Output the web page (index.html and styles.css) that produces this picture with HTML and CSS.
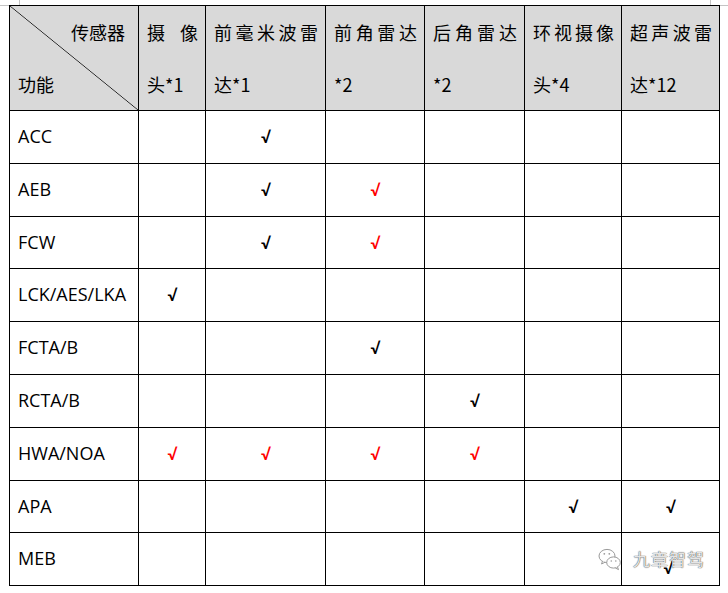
FILE: index.html
```html
<!DOCTYPE html>
<html lang="zh-CN">
<head>
<meta charset="utf-8">
<title>传感器与功能对照表</title>
<link rel="stylesheet" href="styles.css">
</head>
<body>
<div class="page">
  <div class="marks"><span class="mark mark-left"></span><span class="mark mark-right"></span></div>
  <table class="grid">
    <colgroup>
      <col class="c1"><col class="c2"><col class="c3"><col class="c4"><col class="c5"><col class="c6"><col class="c7">
    </colgroup>
    <thead>
      <tr>
        <th class="diag"><div class="diag-top">传感器</div><div class="diag-bottom">功能</div></th>
        <th>摄像头*1</th>
        <th>前毫米波雷达*1</th>
        <th>前角雷达*2</th>
        <th>后角雷达*2</th>
        <th>环视摄像头*4</th>
        <th>超声波雷达*12</th>
      </tr>
    </thead>
    <tbody>
      <tr><td>ACC</td><td></td><td class="ok">√</td><td></td><td></td><td></td><td></td></tr>
      <tr><td>AEB</td><td></td><td class="ok">√</td><td class="ok red">√</td><td></td><td></td><td></td></tr>
      <tr><td>FCW</td><td></td><td class="ok">√</td><td class="ok red">√</td><td></td><td></td><td></td></tr>
      <tr><td>LCK/AES/LKA</td><td class="ok">√</td><td></td><td></td><td></td><td></td><td></td></tr>
      <tr><td>FCTA/B</td><td></td><td></td><td class="ok">√</td><td></td><td></td><td></td></tr>
      <tr><td>RCTA/B</td><td></td><td></td><td></td><td class="ok">√</td><td></td><td></td></tr>
      <tr><td>HWA/NOA</td><td class="ok red">√</td><td class="ok red">√</td><td class="ok red">√</td><td class="ok red">√</td><td></td><td></td></tr>
      <tr><td>APA</td><td></td><td></td><td></td><td></td><td class="ok">√</td><td class="ok">√</td></tr>
      <tr><td>MEB</td><td></td><td></td><td></td><td></td><td></td><td class="ok low">√</td></tr>
    </tbody>
  </table>
  <div class="watermark">
    <svg class="wx" width="24" height="24" viewBox="0 0 24 24">
      <ellipse cx="9" cy="9" rx="8" ry="6.6" fill="#fff" stroke="#9a9a9a" stroke-width="1"/>
      <path d="M4.5 14 L3.6 17 L7 15.2" fill="#fff" stroke="#9a9a9a" stroke-width="1"/>
      <ellipse cx="15.5" cy="15.5" rx="6.8" ry="5.6" fill="#fff" stroke="#9a9a9a" stroke-width="1"/>
      <path d="M19.5 20 L20.5 22.6 L17.4 21" fill="#fff" stroke="#9a9a9a" stroke-width="1"/>
      <circle cx="6.3" cy="6.8" r="0.9" fill="#9a9a9a"/>
      <circle cx="11.3" cy="6.8" r="0.9" fill="#9a9a9a"/>
      <circle cx="13.3" cy="14" r="0.8" fill="#9a9a9a"/>
      <circle cx="17.8" cy="14" r="0.8" fill="#9a9a9a"/>
    </svg>
    <span class="wm-text">九章智驾</span>
  </div>
</div>
</body>
</html>
```
FILE: styles.css
```css
html, body {
  margin: 0;
  padding: 0;
  background: #fff;
}
.page {
  position: relative;
  width: 728px;
  height: 593px;
  overflow: hidden;
  font-family: "Open Sans", "Noto Sans CJK SC", sans-serif;
  color: #000;
}
.marks {
  position: relative;
  height: 5px;
  border-bottom: 1px solid #c4c4c4;
  margin-bottom: -1px;
}
.mark {
  position: absolute;
  top: 0;
  width: 1px;
  height: 5px;
  background: #c4c4c4;
}
.mark-left { left: 19px; }
.mark-right { left: 710px; }

.grid {
  position: relative;
  margin-left: 9px;
  width: 711px;
  table-layout: fixed;
  border-collapse: separate;
  border-spacing: 0;
  border-left: 1px solid #000;
  border-top: 1px solid #000;
  font-size: 18px;
}
.c1 { width: 129px; }
.c2 { width: 67px; }
.c3 { width: 120px; }
.c4 { width: 99px; }
.c5 { width: 100px; }
.c6 { width: 97px; }
.c7 { width: 98px; }

.grid th,
.grid td {
  box-sizing: border-box;
  border-right: 1px solid #000;
  border-bottom: 1px solid #000;
  padding: 0 7px 0 8px;
}
.grid th {
  font-weight: normal;
  background: #d9d9d9;
  text-align: justify;
  vertical-align: top;
  line-height: 52px;
  font-family: "Noto Sans CJK SC", sans-serif;
}
.grid th.diag {
  background: linear-gradient(to top right, #d9d9d9 calc(50% - 0.7px), #222 50%, #d9d9d9 calc(50% + 0.7px));
  text-align: left;
}
.diag-top {
  text-align: right;
  padding-right: 6px;
}
.diag-bottom {
  text-align: left;
}
.grid td {
  height: 52.8px;
  line-height: 51.8px;
  text-align: left;
  vertical-align: middle;
  white-space: nowrap;
}
.grid td.ok {
  text-align: center;
  padding: 0 0 0 1px;
  font-family: Lato, sans-serif;
  font-size: 16px;
  font-weight: bold;
}
.grid td.red {
  color: #ff0000;
}
.grid td.low {
  line-height: 33.8px;
  padding-top: 18px;
  padding-left: 0;
  padding-right: 4px;
}

.watermark {
  position: absolute;
  left: 598px;
  top: 547px;
  display: flex;
  align-items: center;
  gap: 11px;
}
.wm-text {
  font-family: "Noto Sans CJK SC", sans-serif;
  font-size: 17px;
  letter-spacing: 1px;
  color: rgba(255, 255, 255, 0.85);
  text-shadow: 0 0 1px #555, 0 0 1px #555;
  line-height: 20px;
}
```
